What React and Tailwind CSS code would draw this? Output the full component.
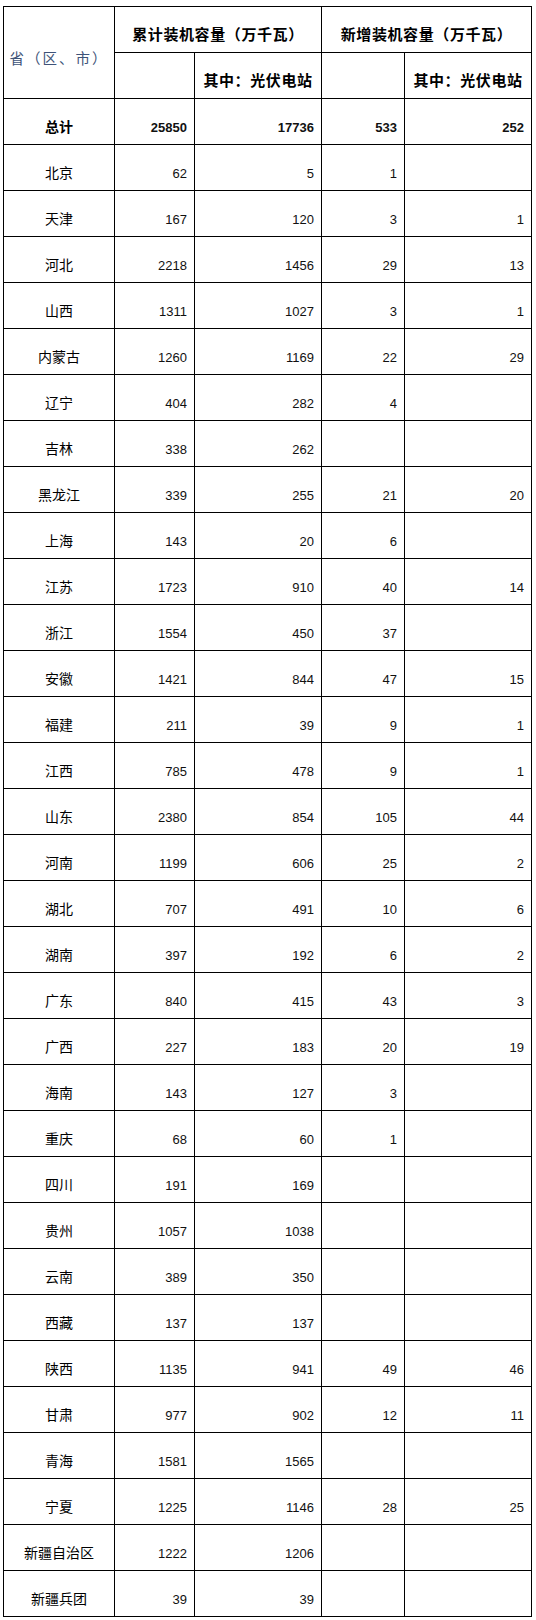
const rows = [
  ['北京', '62', '5', '1', ''],
  ['天津', '167', '120', '3', '1'],
  ['河北', '2218', '1456', '29', '13'],
  ['山西', '1311', '1027', '3', '1'],
  ['内蒙古', '1260', '1169', '22', '29'],
  ['辽宁', '404', '282', '4', ''],
  ['吉林', '338', '262', '', ''],
  ['黑龙江', '339', '255', '21', '20'],
  ['上海', '143', '20', '6', ''],
  ['江苏', '1723', '910', '40', '14'],
  ['浙江', '1554', '450', '37', ''],
  ['安徽', '1421', '844', '47', '15'],
  ['福建', '211', '39', '9', '1'],
  ['江西', '785', '478', '9', '1'],
  ['山东', '2380', '854', '105', '44'],
  ['河南', '1199', '606', '25', '2'],
  ['湖北', '707', '491', '10', '6'],
  ['湖南', '397', '192', '6', '2'],
  ['广东', '840', '415', '43', '3'],
  ['广西', '227', '183', '20', '19'],
  ['海南', '143', '127', '3', ''],
  ['重庆', '68', '60', '1', ''],
  ['四川', '191', '169', '', ''],
  ['贵州', '1057', '1038', '', ''],
  ['云南', '389', '350', '', ''],
  ['西藏', '137', '137', '', ''],
  ['陕西', '1135', '941', '49', '46'],
  ['甘肃', '977', '902', '12', '11'],
  ['青海', '1581', '1565', '', ''],
  ['宁夏', '1225', '1146', '28', '25'],
  ['新疆自治区', '1222', '1206', '', ''],
  ['新疆兵团', '39', '39', '', ''],
];

const cjk = "font-['Liberation_Sans','Noto_Sans_CJK_SC',sans-serif]";
const cell = 'border border-black h-[46px] pt-[12px] pb-0 align-middle';
const num = `${cell} text-right pr-[7px] text-[13px] text-[#111]`;
const head = `${cell} text-center font-bold text-[15px] text-black tracking-[0.6px]`;

export default function App() {
  return (
    <div className={`bg-white min-h-[1620px] pt-[6px] pl-[3px] ${cjk}`}>
      <table className="table-fixed border-collapse w-[529px]">
        <colgroup>
          <col className="w-[111px]" />
          <col className="w-[80px]" />
          <col className="w-[127px]" />
          <col className="w-[83px]" />
          <col className="w-[127px]" />
        </colgroup>
        <thead>
          <tr>
            <th rowSpan={2} className={`${cell} text-center font-normal text-[14.5px] text-[#3e5378] tracking-[2px] pt-[14px]`}>
              省（区、市）
            </th>
            <th colSpan={2} className={head}>累计装机容量（万千瓦）</th>
            <th colSpan={2} className={head}>新增装机容量（万千瓦）</th>
          </tr>
          <tr>
            <th className={cell}></th>
            <th className={head}>其中：光伏电站</th>
            <th className={cell}></th>
            <th className={head}>其中：光伏电站</th>
          </tr>
        </thead>
        <tbody>
          <tr>
            <td className={`${cell} text-center font-bold text-[14px] text-black`}>总计</td>
            <td className={`${num} font-bold`}>25850</td>
            <td className={`${num} font-bold`}>17736</td>
            <td className={`${num} font-bold`}>533</td>
            <td className={`${num} font-bold`}>252</td>
          </tr>
          {rows.map((r) => (
            <tr key={r[0]}>
              <td className={`${cell} text-center text-[14px] text-black`}>{r[0]}</td>
              <td className={num}>{r[1]}</td>
              <td className={num}>{r[2]}</td>
              <td className={num}>{r[3]}</td>
              <td className={num}>{r[4]}</td>
            </tr>
          ))}
        </tbody>
      </table>
    </div>
  );
}
